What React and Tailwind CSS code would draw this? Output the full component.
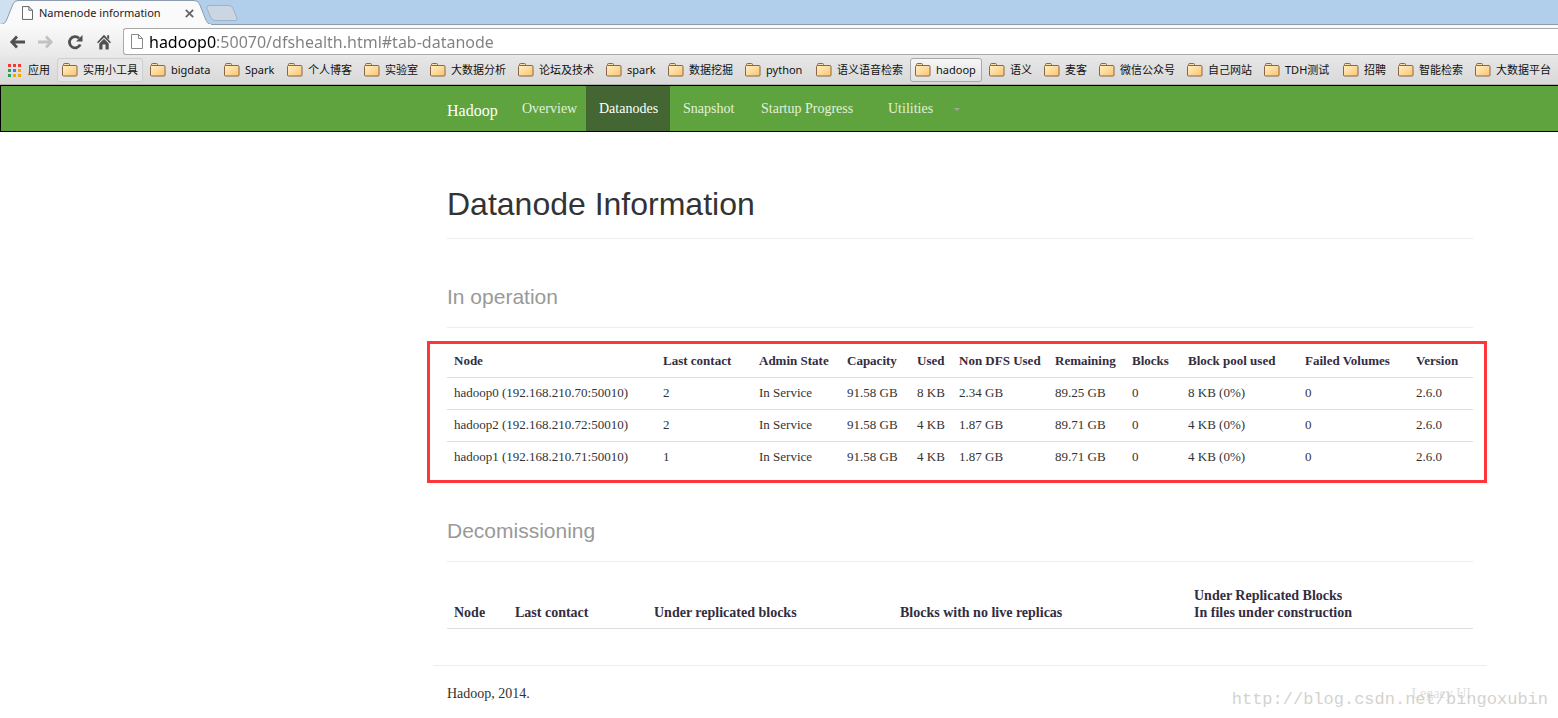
import React from 'react';

const bookmarks = [
  { name: '实用小工具', width: 'w-[55px]', box: 'border-[#cfcfcf] bg-[#e6e6e6]' },
  { name: 'bigdata', width: 'w-[41px]' },
  { name: 'Spark', width: 'w-[30px]' },
  { name: '个人博客', width: 'w-[44px]' },
  { name: '实验室', width: 'w-[33px]' },
  { name: '大数据分析', width: 'w-[55px]' },
  { name: '论坛及技术', width: 'w-[55px]' },
  { name: 'spark', width: 'w-[29px]' },
  { name: '数据挖掘', width: 'w-[44px]' },
  { name: 'python', width: 'w-[38px]' },
  { name: '语义语音检索', width: 'w-[66px]' },
  { name: 'hadoop', width: 'w-[41px]', box: 'border-[#a8a8a8] bg-gradient-to-b from-[#f6f6f6] to-[#e2e2e2]' },
  { name: '语义', width: 'w-[22px]' },
  { name: '麦客', width: 'w-[22px]' },
  { name: '微信公众号', width: 'w-[55px]' },
  { name: '自己网站', width: 'w-[44px]' },
  { name: 'TDH测试', width: 'w-[46px]' },
  { name: '招聘', width: 'w-[22px]' },
  { name: '智能检索', width: 'w-[44px]' },
  { name: '大数据平台', width: 'w-[55px]' },
];

const appColors = [
  '#f03a37', '#f03a37', '#f03a37',
  '#2d9c5a', '#2f86f0', '#f7a30a',
  '#2d9c5a', '#f7a30a', '#f7a30a',
];

const navItems = [
  { name: 'Overview', width: 'w-[77px]' },
  { name: 'Datanodes', width: 'w-[84px]', active: true },
  { name: 'Snapshot', width: 'w-[78px]' },
  { name: 'Startup Progress', width: 'w-[127px]' },
];

const nodeColumns = [
  { name: 'Node', width: 'w-[209px]' },
  { name: 'Last contact', width: 'w-[96px]' },
  { name: 'Admin State', width: 'w-[88px]' },
  { name: 'Capacity', width: 'w-[70px]' },
  { name: 'Used', width: 'w-[42px]' },
  { name: 'Non DFS Used', width: 'w-[96px]' },
  { name: 'Remaining', width: 'w-[77px]' },
  { name: 'Blocks', width: 'w-[56px]' },
  { name: 'Block pool used', width: 'w-[117px]' },
  { name: 'Failed Volumes', width: 'w-[111px]' },
  { name: 'Version', width: 'w-[64px]' },
];

const nodes = [
  ['hadoop0 (192.168.210.70:50010)', '2', 'In Service', '91.58 GB', '8 KB', '2.34 GB', '89.25 GB', '0', '8 KB (0%)', '0', '2.6.0'],
  ['hadoop2 (192.168.210.72:50010)', '2', 'In Service', '91.58 GB', '4 KB', '1.87 GB', '89.71 GB', '0', '4 KB (0%)', '0', '2.6.0'],
  ['hadoop1 (192.168.210.71:50010)', '1', 'In Service', '91.58 GB', '4 KB', '1.87 GB', '89.71 GB', '0', '4 KB (0%)', '0', '2.6.0'],
];

const FileIcon = ({ className }) => (
  <svg className={className} viewBox="0 0 12 15" fill="#fff" strokeWidth="1">
    <path d="M.5.5h7l4 4v10H.5z" />
    <path d="M7.5.5v4h4" fill="none" />
  </svg>
);

const FolderIcon = () => (
  <svg className="h-[14px] w-4 shrink-0" viewBox="0 0 16 14">
    <defs>
      <linearGradient id="folder" x1="0" y1="0" x2="1" y2="1">
        <stop offset="0" stopColor="#fff0c8" />
        <stop offset="1" stopColor="#fbc46c" />
      </linearGradient>
    </defs>
    <path d="M1.5 3.5v-2q0-1 1-1h4q1 0 1 1v2" fill="#f8dfa8" stroke="#8a6548" />
    <path d="M.5 3.500q0-1 1-1h12.500q1 0 1 1v8.500q0 1-1 1H1.500q-1 0-1-1z" fill="url(#folder)" stroke="#8a6548" />
  </svg>
);

const TabStrip = () => (
  <div className="relative flex h-[25px] items-center border-b border-[#8c9cae] bg-[#b1cfeb]">
    <svg className="absolute left-0 top-0 h-[25px] w-[240px]" viewBox="0 0 240 25">
      <path d="M0 0h18L4 24H0z" fill="#cfe0f1" />
      <path d="M0 25v-.5c4 0 5.500-2 7-5.500L13 4q1.500-3.500 5-3.500h176q4 0 5.500 3.500l6 15c1.500 4 3 5.500 7 5.500v.5z" fill="#fafafa" stroke="#8c9cae" />
      <path d="M0 25h211" stroke="#fafafa" strokeWidth="2" />
      <path d="M209 5.500h20q3 0 4 3l4 9.500q1 2.500-2 2.500h-20q-3 0-4-2.500l-4-9.500q-1-3 2-3z" fill="#cbd6e2" stroke="#9fb2c6" />
    </svg>
    <div className="relative flex w-[197px] items-center pt-[2px] pl-[22px]">
      <FileIcon className="h-[14px] w-[11px] stroke-[#555]" />
      <span className="ml-[6px] flex-1 whitespace-nowrap text-[11px] leading-4 text-[#222]">Namenode information</span>
      <button aria-label="Close tab" className="mr-[2px] p-px">
        <svg className="h-[9px] w-[9px]" viewBox="0 0 9 9" stroke="#666" strokeWidth="1.800">
          <path d="M.8.8l7.400 7.400M8.200.8L.8 8.200" />
        </svg>
      </button>
    </div>
  </div>
);

const AddressBar = () => (
  <div className="flex h-8 items-center bg-gradient-to-b from-[#fafafa] to-[#e8e8e8] pt-px pl-[9px]">
    <button aria-label="Back" className="w-[29px]">
      <svg className="h-4 w-4" viewBox="0 0 16 16" fill="none" stroke="#505050" strokeWidth="2.800">
        <path d="M8 2.500L2.800 8 8 13.500M2.500 8H16" />
      </svg>
    </button>
    <button aria-label="Forward" className="w-[29px]">
      <svg className="h-4 w-4" viewBox="0 0 16 16" fill="none" stroke="#c2c2c2" strokeWidth="2.800">
        <path d="M8 2.500L13.200 8 8 13.500M13.500 8H0" />
      </svg>
    </button>
    <button aria-label="Reload" className="w-[29px]">
      <svg className="h-4 w-4" viewBox="0 0 16 16" fill="none" stroke="#505050" strokeWidth="2.800">
        <path d="M12 4.300A5.600 5.600 0 1 0 13.200 10.500" />
        <path d="M15.500 1v6.500H9z" fill="#505050" stroke="none" />
      </svg>
    </button>
    <button aria-label="Home" className="w-[27px]">
      <svg className="h-4 w-4" viewBox="0 0 16 16" fill="#505050">
        <path d="M8 .8l7 7.400-1.100 1.100L8 3.400 2.100 9.300 1 8.200z" />
        <path d="M11.200 1.200h1.900v4.200l-1.900-2z" />
        <path d="M3.300 9.400L8 4.700l4.700 4.700V15.500H9.500V10.500h-3v5H3.300z" />
      </svg>
    </button>
    <label className="flex h-[27px] flex-1 items-center rounded-l-[3px] border border-r-0 border-[#a9a9a9] bg-white pl-[7px]">
      <FileIcon className="h-[15px] w-3 shrink-0 stroke-[#888]" />
      <input
        aria-label="Address"
        defaultValue="hadoop0:50070/dfshealth.html#tab-datanode"
        className="ml-[6px] w-full bg-[linear-gradient(to_right,#000_67px,#808080_67px)] bg-clip-text pt-px text-base leading-6 text-transparent outline-none"
      />
    </label>
  </div>
);

const BookmarksBar = () => (
  <div className="flex h-[28px] items-center overflow-hidden border-b border-[#b0b0b0] bg-gradient-to-b from-[#e6e6e6] to-[#d9d9d9] pb-px pl-2 text-[11px] leading-4 text-[#111]">
    <a href="#apps" className="flex w-[49px] shrink-0 items-center gap-[7px] whitespace-nowrap">
      <svg className="h-[13px] w-[13px]" viewBox="0 0 13 13">
        {appColors.map((color, i) => (
          <rect key={i} x={(i % 3) * 5} y={Math.floor(i / 3) * 5} width="3" height="3" fill={color} />
        ))}
      </svg>
      应用
    </a>
    {bookmarks.map((item) => (
      <a
        key={item.name}
        href="#bookmark"
        className={`mr-[2px] flex h-6 shrink-0 items-center gap-[5px] rounded-[3px] border px-1 ${item.box || 'border-transparent'}`}
      >
        <FolderIcon />
        <span className={`whitespace-nowrap ${item.width}`}>{item.name}</span>
      </a>
    ))}
  </div>
);

const Navbar = () => (
  <nav className="border border-r-0 border-black bg-[#5fa33e]">
    <div className="mr-[71px] ml-auto flex h-[45px] max-w-[1054px] text-[14px] leading-5 text-[#e3f0dc]">
      <a href="#home" className="flex w-[76px] items-center pt-1 pl-[14px] text-base text-white">Hadoop</a>
      {navItems.map((item) => (
        <a
          key={item.name}
          href="#tab"
          className={`flex items-center pt-px pl-[13px] whitespace-nowrap ${item.width} ${item.active ? 'bg-[#446633] text-white' : ''}`}
        >
          {item.name}
        </a>
      ))}
      <a href="#utilities" className="flex w-[98px] items-center justify-between pt-px pr-[13px] pl-[13px]">
        Utilities
        <span className="border-x-[3px] border-t-[3px] border-x-transparent border-t-[#a3a3a3]" />
      </a>
    </div>
  </nav>
);

const App = () => {
  return (
    <div className="bg-white font-['Liberation_Serif','Noto_Sans_CJK_SC',serif] text-[#333]">
      <header className="font-['Noto_Sans','Noto_Sans_CJK_SC',sans-serif]">
        <TabStrip />
        <AddressBar />
        <BookmarksBar />
      </header>
      <Navbar />
      <main className="mr-[71px] ml-auto max-w-[1054px] px-[14px]">
        <h1 className="border-b border-[#eee] pt-[52px] pb-[14px] font-['Liberation_Sans',sans-serif] text-[32px] leading-10">
          Datanode Information
        </h1>
        <h2 className="border-b border-[#eee] pt-[46px] pb-[18px] font-['Liberation_Sans',sans-serif] text-[21px] leading-6 text-[#999]">
          In operation
        </h2>
        <div className="mt-[13px] -mr-[14px] -ml-5 border-[3px] border-[#fd3639] pt-px pr-[11px] pb-[7px] pl-[17px]">
          <table className="w-full table-fixed text-left text-[13px] leading-4">
            <thead>
              <tr className="h-8 border-b border-[#ddd]">
                {nodeColumns.map((col) => (
                  <th key={col.name} className={`pl-[7px] whitespace-nowrap text-[#332d41] ${col.width}`}>{col.name}</th>
                ))}
              </tr>
            </thead>
            <tbody>
              {nodes.map((row) => (
                <tr key={row[0]} className="h-8 border-b border-[#ddd] last:border-b-0">
                  {row.map((cell, i) => (
                    <td key={i} className="pl-[7px] whitespace-nowrap">{cell}</td>
                  ))}
                </tr>
              ))}
            </tbody>
          </table>
        </div>
        <h2 className="border-b border-[#eee] pt-[36px] pb-[18px] font-['Liberation_Sans',sans-serif] text-[21px] leading-6 text-[#999]">
          Decomissioning
        </h2>
        <table className="mt-[18px] w-full table-fixed text-left text-[14px] leading-[17px] text-[#332d41]">
          <thead>
            <tr className="border-b border-[#ddd] align-bottom">
              <th className="w-[61px] py-[7px] pl-[7px]">Node</th>
              <th className="w-[139px] py-[7px] pl-[7px]">Last contact</th>
              <th className="w-[246px] py-[7px] pl-[7px]">Under replicated blocks</th>
              <th className="w-[294px] py-[7px] pl-[7px]">Blocks with no live replicas</th>
              <th className="w-[286px] py-[7px] pl-[7px]">
                Under Replicated Blocks
                <br />
                In files under construction
              </th>
            </tr>
          </thead>
        </table>
      </main>
      <footer className="relative pt-9 pb-3">
        <div className="mr-[71px] ml-auto flex max-w-[1054px] justify-between border-t border-[#eee] px-[14px] pt-[18px] text-[14px] leading-5">
          <p>Hadoop, 2014.</p>
          <a href="#legacy" className="pr-[2px] text-[#ddd]">Legacy UI</a>
        </div>
        <span className="absolute right-[10px] bottom-1 font-['Liberation_Mono',monospace] text-[17px] leading-6 text-[#d3d3ce]">
          http://blog.csdn.net/bingoxubin
        </span>
      </footer>
    </div>
  );
};

export default App;
